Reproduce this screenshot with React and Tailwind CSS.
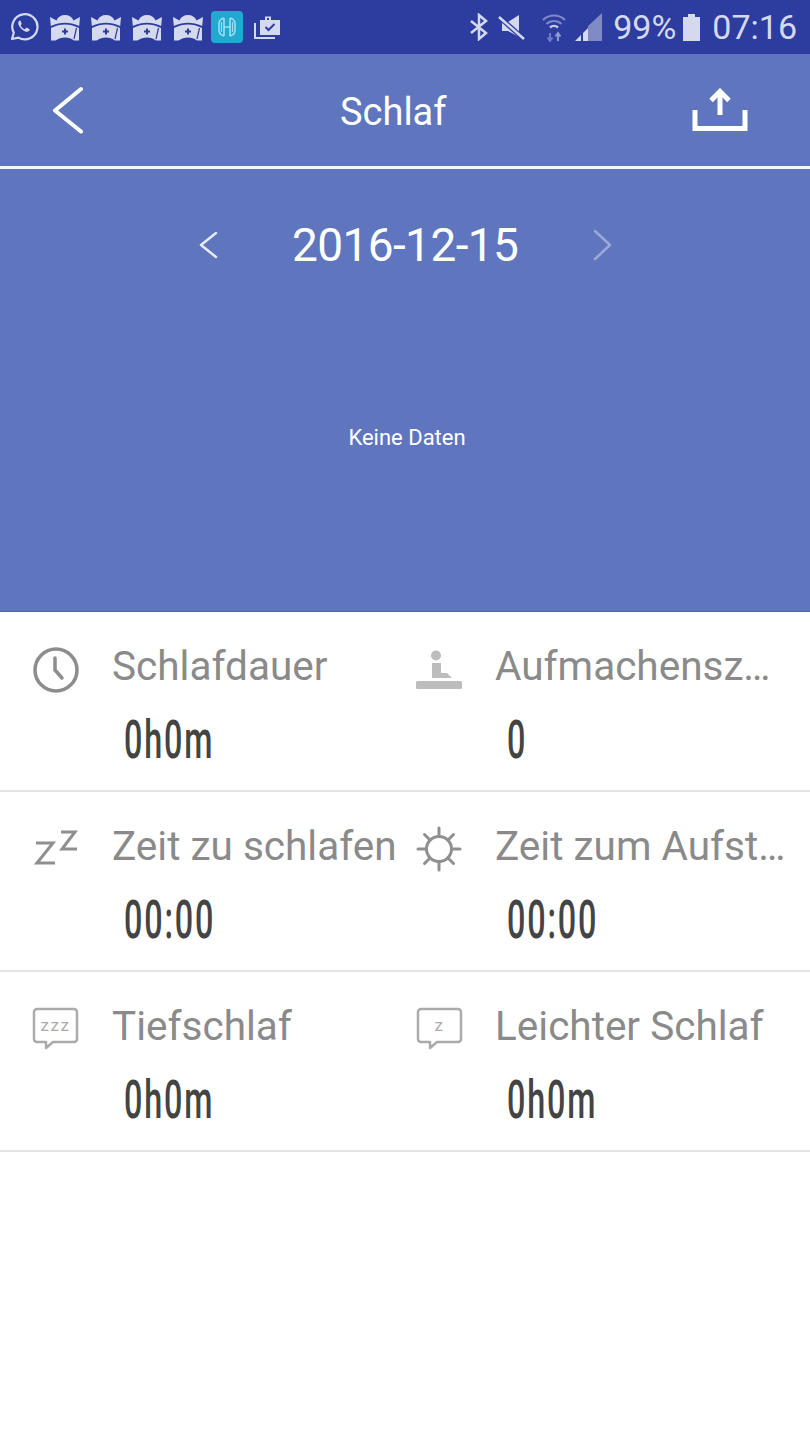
import React from 'react';

const ICON = '#d5d9ee';

const WhatsApp = () => (
    <svg width="30" height="30" viewBox="0 0 30 30" fill="none">
        <path d="M3 27l1.8-6.2A12.6 12.6 0 1 1 9.4 25.6L3 27z" stroke={ICON} strokeWidth="2.2" strokeLinejoin="round" />
        <path d="M10.6 8.6c-1.4 1-1.8 2.6-1 4.4 1.4 3 3.6 5.2 6.6 6.4 1.8.7 3.4.2 4.3-1.2.4-.6.2-1-.3-1.3l-2.2-1.1c-.5-.2-.8-.1-1.1.3l-.7.9c-.2.3-.5.3-.8.2-1.6-.7-2.8-1.9-3.6-3.4-.2-.3-.1-.5.1-.8l.6-.7c.2-.3.3-.5.1-.9l-1-2.3c-.3-.7-.6-.8-1-.5z" fill={ICON} />
    </svg>
);

const Crown = () => (
    <svg width="30" height="27" viewBox="0 0 30 27">
        <path d="M0 3l6.500 3.400C8 3 11 1 15 1s7 2 8.500 5.400L30 3l-.8 9C24 9.500 19.500 8.800 15 8.800S6 9.500.8 12L0 3z" fill={ICON} />
        <path d="M1 14C6 11.500 10.500 10.500 15 10.500S24 11.500 29 14v12.500h-5C21.500 24.500 18.500 23.500 15 23.500s-6.500 1-9.500 3H1V14z" fill={ICON} />
        <path d="M14 14.500h2v2h2v2h-2v2h-2v-2h-2v-2h2z" fill="#2d3c9f" />
        <path d="M26.500 14l-2.500 11" stroke="#2d3c9f" strokeWidth="1.200" fill="none" />
    </svg>
);

const HubApp = () => (
    <div className="w-[32px] h-[32px] rounded-[4px] bg-[#23a9cf] flex items-center justify-center">
        <svg width="20" height="22" viewBox="0 0 20 22" fill="none" stroke="#9be0f0" strokeWidth="1.600">
            <path d="M7 2v18M13 2v18M7 11h6" />
            <path d="M7 2C3 3 2 5 2 8v6c0 3 1 5 5 6M13 2c4 1 5 3 5 6v6c0 3-1 5-5 6" />
            <path d="M4.500 6v10M15.500 6v10" strokeWidth="1.200" />
        </svg>
    </div>
);

const Briefcase = () => (
    <svg width="28" height="28" viewBox="0 0 28 28" fill="none">
        <path d="M2 10v15h20" stroke={ICON} strokeWidth="2" />
        <path d="M7 7h5V3.500h6V7h9v15H7z" fill={ICON} />
        <path d="M14 5v2h2V5z" fill="#2d3c9f" />
        <path d="M12.500 14l3 3 6-6" stroke="#2d3c9f" strokeWidth="2" />
    </svg>
);

const Bluetooth = () => (
    <svg width="20" height="28" viewBox="0 0 20 28" fill="none" stroke={ICON} strokeWidth="2.500">
        <path d="M2 8l15 12-7 6V2l7 6L2 20" />
    </svg>
);

const Muted = () => (
    <svg width="28" height="26" viewBox="0 0 28 26">
        <path d="M4 8h6l11-7v22l-11-6H4z" fill={ICON} />
        <path d="M0 2l26 23" stroke="#2d3c9f" strokeWidth="5" />
        <path d="M1 3l25 22" stroke={ICON} strokeWidth="2.500" />
    </svg>
);

const WifiIcon = () => (
    <svg width="26" height="30" viewBox="0 0 26 30" fill="none" stroke="#7f8ac7" strokeWidth="2">
        <path d="M2 8a16 16 0 0 1 22 0M5.500 12a11 11 0 0 1 15 0" />
        <path d="M9 15.500a6 6 0 0 1 8 0" stroke="#c2c8e6" strokeWidth="2.500" />
        <path d="M9 21v8M6.500 25.500L9 29l2.500-3.500" stroke="#6f7bc0" />
        <path d="M17 29v-8M14.500 24.500L17 21l2.500 3.500" stroke="#8f99d0" />
    </svg>
);

const Signal = () => (
    <svg width="28" height="28" viewBox="0 0 28 28">
        <path d="M27 0v28H13V13z" fill="#7f8ac7" />
        <path d="M0 28l6-6v6zM8 28v-8l5-5v13z" fill={ICON} />
    </svg>
);

const Chevron = ({ d, width, height, stroke, strokeWidth }) => (
    <svg width={width} height={height} viewBox={`0 0 ${width} ${height}`} fill="none" stroke={stroke} strokeWidth={strokeWidth} strokeLinecap="round" strokeLinejoin="round">
        <path d={d} />
    </svg>
);

const Upload = () => (
    <svg width="56" height="44" viewBox="0 0 56 44" fill="none" stroke="white" strokeWidth="5">
        <path d="M3 22v18.500h50V22" />
        <path d="M28 27V5" />
        <path d="M19 12.500L28 3.500l9 9" />
    </svg>
);

const Clock = () => (
    <svg width="48" height="48" viewBox="0 0 48 48" fill="none" stroke="#8d8d8d" strokeWidth="3.500" strokeLinecap="round">
        <circle cx="24" cy="24" r="21" />
        <path d="M23 12v12l7 8" />
    </svg>
);

const Wake = () => (
    <svg width="46" height="44" viewBox="0 0 46 44" fill="#bdbdbd">
        <circle cx="20" cy="9.500" r="5" />
        <path d="M16 17h9v10h6l5 5H16z" />
        <rect x="0" y="35" width="46" height="8" rx="1.500" />
    </svg>
);

const Zz = () => (
    <svg width="48" height="42" viewBox="0 0 48 42" fill="none" stroke="#8f8f8f" strokeWidth="3">
        <path d="M4 17h17L5 37h18" />
        <path d="M29 6h14L30 23h15" />
    </svg>
);

const Sun = () => (
    <svg width="46" height="46" viewBox="0 0 46 46" fill="none" stroke="#8f8f8f" strokeWidth="3" strokeLinecap="round">
        <circle cx="23" cy="23" r="12.500" />
        <path d="M23 2v7M23 37v7M2 23h7M37 23h7M8.500 8.500l4 4M33.500 33.500l4 4M37.500 8.500l-4 4M12.500 33.500l-4 4" />
    </svg>
);

const Bubble = ({ children }) => (
    <svg width="48" height="46" viewBox="0 0 48 46" fill="none">
        <path d="M5 3h37a3 3 0 0 1 3 3v27a3 3 0 0 1-3 3H21l-7 6v-6H5a3 3 0 0 1-3-3V6a3 3 0 0 1 3-3z" stroke="#ababab" strokeWidth="2.500" strokeLinejoin="round" />
        <text x="23.500" y="25" textAnchor="middle" fill="#ababab" fontSize="17" fontFamily="Roboto, sans-serif" letterSpacing="1.500">{children}</text>
    </svg>
);

const Stat = ({ icon, label, value, right }) => (
    <div className={right ? 'flex-1 min-w-0 flex' : 'w-[405px] shrink-0 flex'}>
        <div className={right ? 'w-[90px] shrink-0 pl-[11px] pt-[34px]' : 'w-[112px] shrink-0 pl-[32px] pt-[34px]'}>{icon}</div>
        <div className="flex-1 min-w-0 pt-[31px]">
            <div className={right ? 'text-[40.5px] leading-[46px] text-[#8a8a8a] truncate pr-[21px]' : 'text-[40.5px] leading-[46px] text-[#8a8a8a] whitespace-nowrap'}>{label}</div>
            <div className="mt-[21px] ml-[12px] text-[53px] leading-[60px] font-medium tracking-[3px] text-[#444444] origin-left scale-x-[0.61] whitespace-nowrap">{value}</div>
        </div>
    </div>
);

const rows = [
    [
        { icon: <Clock />, label: 'Schlafdauer', value: '0h0m' },
        { icon: <Wake />, label: 'Aufmachenszeiten', value: '0' },
    ],
    [
        { icon: <Zz />, label: 'Zeit zu schlafen', value: '00:00' },
        { icon: <Sun />, label: 'Zeit zum Aufstehen', value: '00:00' },
    ],
    [
        { icon: <Bubble>zzz</Bubble>, label: 'Tiefschlaf', value: '0h0m' },
        { icon: <Bubble>z</Bubble>, label: 'Leichter Schlaf', value: '0h0m' },
    ],
];

export default function App() {
    return (
        <div className="w-[810px] h-[1440px] bg-white overflow-hidden font-['Roboto',sans-serif]">
            <div className="h-[54px] bg-[#2d3c9f] flex items-center justify-between pl-[9px] pr-[13px]">
                <div className="flex items-center">
                    <WhatsApp />
                    <div className="flex items-center gap-[11px] ml-[11px]"><Crown /><Crown /><Crown /><Crown /></div>
                    <div className="ml-[8px]"><HubApp /></div>
                    <div className="ml-[10px]"><Briefcase /></div>
                </div>
                <div className="flex items-center">
                    <Bluetooth />
                    <div className="ml-[9px]"><Muted /></div>
                    <div className="ml-[15px]"><WifiIcon /></div>
                    <div className="ml-[8px]"><Signal /></div>
                    <span className="ml-[10px] text-[34px] leading-none text-[#d5d9ee]">99%</span>
                    <div className="ml-[7px] relative w-[17px] h-[24px] mt-[3px] bg-[#d5d9ee]">
                        <div className="absolute -top-[3px] left-[5px] w-[7px] h-[3px] bg-[#d5d9ee]"></div>
                    </div>
                    <span className="ml-[12px] text-[34px] leading-none text-[#d5d9ee]">07:16</span>
                </div>
            </div>

            <div className="h-[112px] bg-[#5f76be] flex items-center justify-between pl-[52px] pr-[62px] relative">
                <Chevron d="M29 3L3 24.500l26 21" width={32} height={48} stroke="white" strokeWidth={4} />
                <span className="absolute left-[340px] top-[34px] text-[38px] leading-[48px] text-white">Schlaf</span>
                <Upload />
            </div>
            <div className="h-[3px] bg-[#f4f6fb]"></div>

            <div className="h-[443px] bg-[#5f76be] flex flex-col items-center border-b border-[#4f66ae]">
                <div className="mt-[46px] w-full flex items-center h-[60px]">
                    <div className="ml-[199px]">
                        <Chevron d="M17 2L2 14l15 12" width={19} height={28} stroke="#e6eaf6" strokeWidth={2.500} />
                    </div>
                    <span className="ml-[74px] text-[46px] leading-[60px] tracking-[-0.6px] text-white">2016-12-15</span>
                    <div className="ml-[75px]">
                        <Chevron d="M2 2l15 14L2 30" width={19} height={32} stroke="#9aa9d8" strokeWidth={2.500} />
                    </div>
                </div>
                <div className="mt-[149px] ml-[4px] text-[22px] leading-[28px] text-white">Keine Daten</div>
            </div>

            <div>
                {rows.map((row, i) => (
                    <div key={i} className="h-[180px] flex border-b-2 border-[#e4e4e4]">
                        {row.map((stat, j) => (
                            <Stat key={stat.label} right={j === 1} {...stat} />
                        ))}
                    </div>
                ))}
            </div>
        </div>
    );
}
